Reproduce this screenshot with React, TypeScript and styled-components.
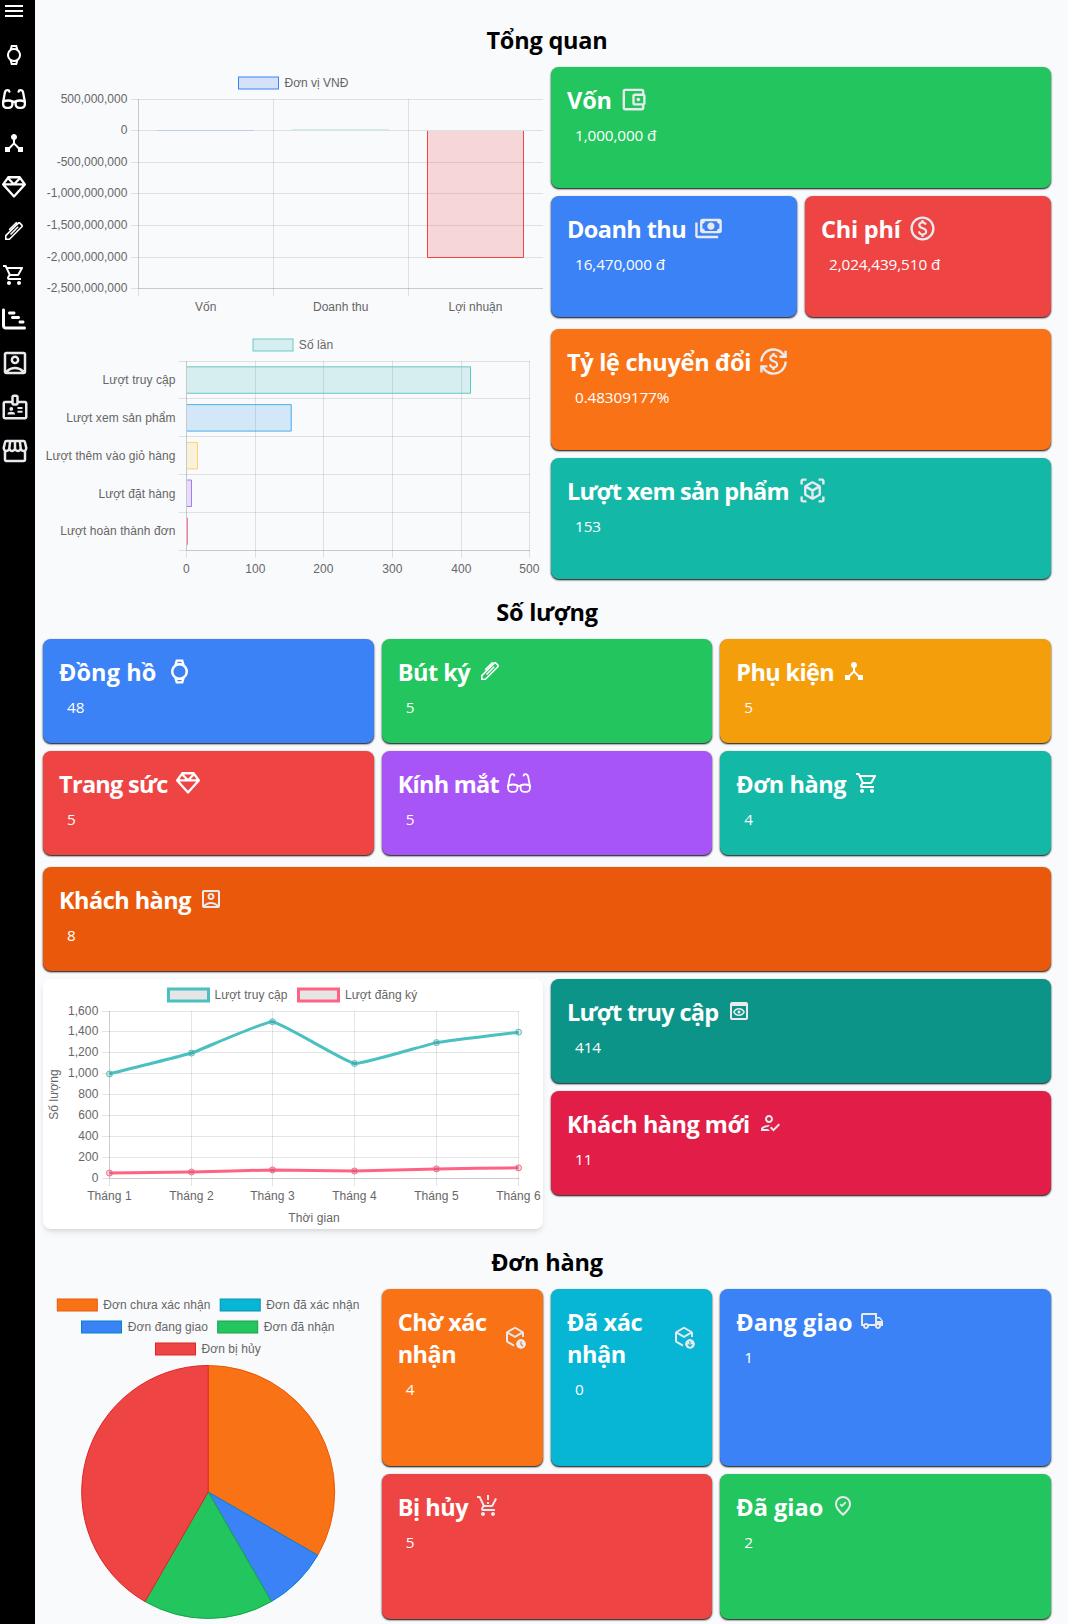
import React from 'react';
import styled, { createGlobalStyle } from 'styled-components';
import {
  MdMenu,
  MdDeviceHub,
  MdOutlineShoppingCart,
  MdOutlineAccountBox,
  MdOutlineBadge,
  MdOutlineStorefront,
  MdOutlineAccountBalanceWallet,
  MdOutlinePaid,
  MdCurrencyExchange,
  MdOutlinePreview,
  MdOutlineHowToReg,
  MdOutlineLocalShipping,
  MdProductionQuantityLimits,
} from 'react-icons/md';
import { FaRegGem, FaChartGantt } from 'react-icons/fa6';

const GlobalStyle = createGlobalStyle`
  *, *::before, *::after { box-sizing: border-box; }
  body {
    margin: 0;
    background: #f9fafc;
    font-family: 'Open Sans', 'Noto Sans', sans-serif;
    font-size: 16px;
    line-height: 24px;
    color: #000;
  }
`;

const Page = styled.div`
  display: flex;
  min-height: 1624px;
  overflow: hidden;
`;

const Sidebar = styled.nav`
  width: 35px;
  flex: none;
  background: #000;
  display: flex;
  flex-direction: column;
`;

const NavItem = styled.a<{ $first?: boolean; $soft?: boolean }>`
  display: flex;
  align-items: center;
  justify-content: center;
  flex: none;
  width: ${(p) => (p.$soft ? 30 : 28)}px;
  height: ${(p) => (p.$first ? 22 : 44)}px;
  margin-bottom: ${(p) => (p.$first ? 11 : 0)}px;
  color: ${(p) => (p.$soft ? '#e8eaed' : '#fff')};

  svg {
    display: block;
    flex: none;
  }
`;

const Main = styled.main`
  flex: 1;
  padding: 23px 17px 4px 8px;
`;

const Section = styled.section`
  margin-bottom: 16px;
`;

const Heading = styled.h2`
  margin: 0 0 11px;
  padding-top: 1px;
  font-size: 23.5px;
  line-height: 32px;
  font-weight: 700;
  letter-spacing: -0.2px;
  text-align: center;
`;

const Grid = styled.div<{ $cols: number; $top?: number; $rows?: string }>`
  display: grid;
  grid-template-columns: repeat(${(p) => p.$cols}, minmax(0, 1fr));
  grid-template-rows: ${(p) => p.$rows ?? 'none'};
  gap: 8px;
  margin-top: ${(p) => p.$top ?? 0}px;
`;

const CardBox = styled.article<{ $bg: string; $h?: number; $span?: number }>`
  height: ${(p) => (p.$h ? `${p.$h}px` : 'auto')};
  grid-column: span ${(p) => p.$span ?? 1};
  padding: 16px;
  border-radius: 8px;
  background: ${(p) => p.$bg};
  box-shadow: 0 1px 2px 0 #000;
  color: #fff;
`;

const CardHead = styled.div`
  display: flex;
  align-items: center;
  min-height: 32px;

  svg {
    display: block;
    flex: none;
    margin-top: -8px;
    margin-bottom: -8px;
  }
`;

const CardTitle = styled.h3<{ $w: number; $track?: number }>`
  flex: none;
  width: ${(p) => p.$w}px;
  margin: 1px 0 -1px;
  font-size: 23.5px;
  line-height: 32px;
  font-weight: 700;
  letter-spacing: ${(p) => p.$track ?? -0.23}px;
  white-space: ${(p) => (p.$w === 105 ? 'normal' : 'nowrap')};
`;

const CardValue = styled.p`
  margin: 8px 0 0 8px;
  font-size: 15.3px;
  line-height: 24px;
  letter-spacing: -0.1px;
`;

const Stack = styled.div`
  display: flex;
  flex-direction: column;
  gap: 8px;
`;

const ChartPanel = styled.div<{ $raised?: boolean; $h?: number }>`
  height: ${(p) => p.$h ?? 250}px;
  border-radius: 8px;
  background: ${(p) => (p.$raised ? '#fff' : 'transparent')};
  box-shadow: ${(p) =>
    p.$raised ? '0 4px 6px -1px rgba(0,0,0,.1), 0 2px 4px -2px rgba(0,0,0,.1)' : 'none'};
`;

const PiePanel = styled.div`
  grid-column: span 2;
  grid-row: span 2;
`;

const ChartSvg = styled.svg<{ $track?: number }>`
  display: block;
  overflow: visible;

  text {
    font-family: 'Liberation Sans', Arial, sans-serif;
    font-size: 12px;
    letter-spacing: ${(p) => p.$track ?? 0.08}px;
    fill: #666;
  }
`;

/* ---------- icons ---------- */

type IconProps = { size?: number };

const Symbol = ({ size = 24, d }: { size?: number; d: string }) => (
  <svg width={size} height={size} viewBox="0 -960 960 960" fill="currentColor">
    <path d={d} />
  </svg>
);

const WatchIcon = ({ size }: IconProps) => (
  <Symbol
    size={size}
    d="m360-80-54-182q-48-38-77-95t-29-123q0-66 29-123t77-95l54-182h240l54 182q48 38 77 95t29 123q0 66-29 123t-77 95L600-80H360Zm120-200q83 0 141.500-58.500T680-480q0-83-58.500-141.500T480-680q-83 0-141.500 58.500T280-480q0 83 58.500 141.500T480-280Zm-76-470q20-5 38.500-8t37.500-3q19 0 37.500 3t38.500 8l-16-50H420l-16 50Zm16 590h120l16-50q-20 5-38.500 7.500T480-200q-19 0-37.500-2.500T404-210l16 50Z"
  />
);

const PaymentsIcon = ({ size }: IconProps) => (
  <Symbol
    size={size}
    d="M560-440q-50 0-85-35t-35-85q0-50 35-85t85-35q50 0 85 35t35 85q0 50-35 85t-85 35ZM280-320q-33 0-56.500-23.500T200-400v-320q0-33 23.500-56.500T280-800h560q33 0 56.500 23.500T920-720v320q0 33-23.500 56.500T840-320H280Zm80-80h400q0-33 23.500-56.500T840-480v-160q-33 0-56.500-23.500T760-720H360q0 33-23.500 56.500T280-640v160q33 0 56.500 23.500T360-400Zm440 240H120q-33 0-56.500-23.500T40-240v-440h80v440h680v80Z"
  />
);

const ViewInArIcon = ({ size }: IconProps) => (
  <Symbol
    size={size}
    d="M440-181 240-296q-19-11-29.500-29T200-365v-230q0-22 10.500-40t29.500-29l200-115q19-11 40-11t40 11l200 115q19 11 29.500 29t10.500 40v230q0 22-10.500 40T720-296L520-181q-19 11-40 11t-40-11Zm0-92v-184l-160-93v185l160 92Zm80 0 160-92v-185l-160 93v184ZM80-680v-120q0-33 23.500-56.500T160-880h120v80H160v120H80ZM280-80H160q-33 0-56.500-23.500T80-160v-120h80v120h120v80Zm400 0v-80h120v-120h80v120q0 33-23.500 56.500T800-80H680Zm120-600v-120H680v-80h120q33 0 56.500 23.500T880-800v120h-80ZM480-526l158-93-158-91-158 91 158 93Z"
  />
);

const VotePinIcon = ({ size }: IconProps) => (
  <Symbol
    size={size}
    d="m438-434 180-180-46-46-134 134-52-52-46 46 98 98ZM480-80Q319-217 239.500-334.500T160-552q0-150 96.500-239T480-880q127 0 223.500 89T800-552q0 100-79.500 217.500T480-80Zm0-106q122-112 181-203.500T720-552q0-109-69.500-178.500T480-800q-101 0-170.500 69.500T240-552q0 71 59 162.500T480-186Z"
  />
);

const GlassesIcon = ({ stroke = 2.3 }: { stroke?: number }) => (
  <svg
    width="24"
    height="24"
    viewBox="0 0 24 24"
    fill="none"
    stroke="currentColor"
    strokeWidth={stroke}
    strokeLinecap="round"
    strokeLinejoin="round"
  >
    <path d="M1.100 14.800Q5.800 12.400 10.400 14.400V17.300a3.600 3.600 0 0 1-3.600 3.600H4.700a3.600 3.600 0 0 1-3.600-3.600Z" />
    <path d="M22.900 14.800Q18.200 12.400 13.600 14.400V17.300a3.600 3.600 0 0 0 3.600 3.600h2.100a3.600 3.600 0 0 0 3.600-3.600Z" />
    <path d="M1.100 15.200 2.900 5.400Q3.400 3.200 5.600 3.200 7.200 3.200 7.400 4.600M22.900 15.200 21.100 5.400Q20.600 3.200 18.400 3.200 16.800 3.200 16.600 4.600M10.400 15.400Q12 14.200 13.600 15.400" />
  </svg>
);

const PenIcon = () => (
  <svg width="24" height="24" viewBox="0 0 24 24" fill="none" stroke="currentColor" strokeWidth="1.600">
    <path d="M3.800 20.200v-3.600L16.500 3.900h1.100l2.500 2.500v1.100L7.400 20.200Z" />
    <path d="M7.200 10.900 14.200 3.900l1.700 1.700M8.500 15.500 16.200 7.800" />
  </svg>
);

const BoxBadge = ({ kind }: { kind: 'clock' | 'down' }) => {
  const mark = kind === 'clock' ? 'M18 16.400V19.200l1.800 1.800' : 'M18 16.300v5M15.900 19.300 18 21.400l2.100-2.100';
  const id = `badge-${kind}`;
  return (
    <svg width="24" height="24" viewBox="0 0 24 24" fill="none" stroke="currentColor" strokeWidth="2">
      <path d="M11 20.600 4.500 16.900Q4 16.600 4 16V7.900Q4 7.300 4.500 7L11.500 3q.5-.3 1 0L19.500 7q.5.3.5.9V12" />
      <path d="M4.300 7.400 12 11.800 19.700 7.400" />
      <mask id={id}>
        <circle cx="18" cy="19" r="5" fill="#fff" stroke="none" />
        <path d={mark} stroke="#000" strokeWidth="1.100" />
      </mask>
      <circle cx="18" cy="19" r="5" fill="currentColor" stroke="none" mask={`url(#${id})`} />
    </svg>
  );
};

const Soft = styled.span`
  display: flex;
  color: #e8eaed;
`;

/* ---------- cards ---------- */

type CardProps = {
  title: string;
  value: string;
  bg: string;
  w: number;
  icon: React.ReactNode;
  soft?: boolean;
  h?: number;
  span?: number;
  track?: number;
};

const Card = ({ title, value, bg, w, icon, soft, h, span, track }: CardProps) => (
  <CardBox $bg={bg} $h={h} $span={span}>
    <CardHead>
      <CardTitle $w={w} $track={track}>
        {title}
      </CardTitle>
      {soft ? <Soft>{icon}</Soft> : icon}
    </CardHead>
    <CardValue>{value}</CardValue>
  </CardBox>
);

/* ---------- charts ---------- */

const GRID = 'rgba(0,0,0,.1)';

type LegendProps = { x: number; y?: number; label: string; fill: string; stroke: string; sw?: number; tx: number };
const Legend = ({ x, y = 10, label, fill, stroke, sw = 1, tx }: LegendProps) => (
  <>
    <rect x={x} y={y} width="40" height="12" fill={fill} stroke={stroke} strokeWidth={sw} />
    <text x={tx} y={y + 10.300}>
      {label}
    </text>
  </>
);

type AxesProps = {
  xs: number[];
  ys: number[];
  left: number;
  right: number;
  top: number;
  tick: number;
};
const Axes = ({ xs, ys, left, right, top, tick }: AxesProps) => {
  const bottom = ys[ys.length - 1];
  return (
    <g stroke={GRID}>
      {ys.map((y) => (
        <line key={`h${y}`} x1={left} x2={right} y1={y} y2={y} />
      ))}
      {xs.map((x) => (
        <line key={`v${x}`} x1={x} x2={x} y1={top} y2={tick} />
      ))}
      <line x1={xs[0]} x2={xs[0]} y1={top} y2={bottom} />
      <line x1={xs[0]} x2={right} y1={bottom} y2={bottom} />
    </g>
  );
};

const MoneyChart = () => {
  const ys = [32.500, 63.500, 95.500, 126.500, 158.500, 190.500, 221.500];
  const labels = [
    '500,000,000',
    '0',
    '-500,000,000',
    '-1,000,000,000',
    '-1,500,000,000',
    '-2,000,000,000',
    '-2,500,000,000',
  ];
  return (
    <ChartSvg $track={0} width="500" height="250" viewBox="0 0 500 250">
      <Legend x={195.500} tx={241.500} label="Đơn vị VNĐ" fill="rgba(59,130,246,.2)" stroke="#3b82f6" />
      <Axes xs={[95.500, 230.500, 365.500]} ys={ys} left={88} right={500} top={32} tick={229} />
      <rect x="114" y="63" width="97" height="1" fill="rgba(59,130,246,.2)" />
      <rect x="249" y="62" width="97" height="1" fill="rgba(34,197,94,.2)" />
      <rect x="384" y="64" width="97" height="127" fill="rgba(239,68,68,.2)" />
      <path d="M384.500 64V190.500H480.500V64" fill="none" stroke="#ef4444" />
      {labels.map((t, i) => (
        <text key={t} x="84.400" y={ys[i] + 3.800} textAnchor="end">
          {t}
        </text>
      ))}
      <g textAnchor="middle">
        <text x="162.700" y="244">Vốn</text>
        <text x="297.700" y="244">Doanh thu</text>
        <text x="432.500" y="244">Lợi nhuận</text>
      </g>
    </ChartSvg>
  );
};

const FunnelChart = () => {
  const xs = [143.500, 212.500, 280.500, 349.500, 418.500, 486.500];
  const bars = [
    { label: 'Lượt truy cập', end: 428, y: 37.800, c: '75,192,192' },
    { label: 'Lượt xem sản phẩm', end: 248.700, y: 75.600, c: '54,162,235' },
    { label: 'Lượt thêm vào giỏ hàng', end: 155, y: 113.400, c: '255,206,86' },
    { label: 'Lượt đặt hàng', end: 149, y: 151, c: '153,102,255' },
    { label: 'Lượt hoàn thành đơn', end: 145, y: 189, c: '255,99,132' },
  ];
  const labelYs = [55.300, 93.100, 130.900, 168.500, 205.600];
  return (
    <ChartSvg width="500" height="250" viewBox="0 0 500 250">
      <Legend x={210} tx={255.800} label="Số lần" fill="rgba(75,192,192,.2)" stroke="rgba(75,192,192,.8)" />
      <Axes
        xs={xs}
        ys={[32.500, 69.500, 107.500, 145.500, 183.500, 221.500]}
        left={135.500}
        right={487}
        top={32}
        tick={229}
      />
      {bars.map((b, i) => (
        <g key={b.label}>
          <rect x="144" y={b.y} width={b.end - 144} height="26.500" fill={`rgba(${b.c},.2)`} />
          <path
            d={`M144 ${b.y}H${b.end - 0.500}V${b.y + 26.500}H144`}
            fill="none"
            stroke={`rgba(${b.c},.85)`}
          />
          <text x="132.500" y={labelYs[i]} textAnchor="end">
            {b.label}
          </text>
        </g>
      ))}
      {xs.map((x, i) => (
        <text key={x} x={x} y="244.300" textAnchor="middle">
          {i * 100}
        </text>
      ))}
    </ChartSvg>
  );
};

const curve = (pts: [number, number][], tension: number) => {
  const ctl = pts.map((p, i) => {
    const a = pts[Math.max(i - 1, 0)];
    const b = pts[Math.min(i + 1, pts.length - 1)];
    const d1 = Math.hypot(p[0] - a[0], p[1] - a[1]);
    const d2 = Math.hypot(b[0] - p[0], b[1] - p[1]);
    const sum = d1 + d2 || 1;
    const fa = (tension * d1) / sum;
    const fb = (tension * d2) / sum;
    const dx = b[0] - a[0];
    const dy = b[1] - a[1];
    return { inn: [p[0] - fa * dx, p[1] - fa * dy], out: [p[0] + fb * dx, p[1] + fb * dy] };
  });
  return pts
    .map((p, i) => (i === 0 ? `M${p.join(' ')}` : `C${ctl[i - 1].out.join(' ')} ${ctl[i].inn.join(' ')} ${p.join(' ')}`))
    .join('');
};

const VisitsChart = () => {
  const xs = [66.500, 148.500, 229.500, 311.500, 393.500, 475.500];
  const ys = [32.500, 52.500, 73.500, 94.500, 115.500, 136.500, 157.500, 178.500, 199.500];
  const labels = ['1,600', '1,400', '1,200', '1,000', '800', '600', '400', '200', '0'];
  const series = [
    { color: 'rgb(255,99,132)', data: [50, 60, 80, 70, 90, 100] },
    { color: 'rgb(75,192,192)', data: [1000, 1200, 1500, 1100, 1300, 1400] },
  ];
  return (
    <ChartSvg width="500" height="250" viewBox="0 0 500 250">
      <Legend x={125.500} tx={171.500} label="Lượt truy cập" fill="rgba(0,0,0,.1)" stroke="rgb(75,192,192)" sw={3} />
      <Legend x={255.500} tx={302} label="Lượt đăng ký" fill="rgba(0,0,0,.1)" stroke="rgb(255,99,132)" sw={3} />
      <Axes xs={xs} ys={ys} left={59} right={476} top={32} tick={207} />
      {series.map((s) => {
        const pts = s.data.map((v, i): [number, number] => [xs[i], 199.300 - (v / 1600) * 167]);
        return (
          <g key={s.color} stroke={s.color}>
            <path d={curve(pts, 0.100)} fill="none" strokeWidth="3" />
            {pts.map((p) => (
              <circle key={p[0]} cx={p[0]} cy={p[1]} r="3" fill="rgba(0,0,0,.1)" />
            ))}
          </g>
        );
      })}
      {labels.map((t, i) => (
        <text key={t} x="55.400" y={ys[i] + 3.800} textAnchor="end">
          {t}
        </text>
      ))}
      <g textAnchor="middle">
        {xs.map((x, i) => (
          <text key={x} x={x} y="221.300">
            {`Tháng ${i + 1}`}
          </text>
        ))}
        <text x="271" y="243.300">Thời gian</text>
        <text transform="translate(15 115.500) rotate(-90)">Số lượng</text>
      </g>
    </ChartSvg>
  );
};

const OrdersPie = () => {
  const cx = 165.200;
  const cy = 203;
  const r = 126.500;
  const slices = [
    { n: 4, fill: '#f97316', stroke: '#ea580c' },
    { n: 1, fill: '#3b82f6', stroke: '#0284c7' },
    { n: 2, fill: '#22c55e', stroke: '#16a34a' },
    { n: 5, fill: '#ef4444', stroke: '#dc2626' },
  ];
  let acc = 0;
  const at = (k: number) => {
    const a = (k / 12) * Math.PI * 2;
    return `${cx + r * Math.sin(a)} ${cy - r * Math.cos(a)}`;
  };
  return (
    <ChartSvg width="330" height="330" viewBox="0 0 330 330">
      <Legend x={14.300} tx={60.200} label="Đơn chưa xác nhận" fill="#f97316" stroke="#ea580c" />
      <Legend x={177.200} tx={223.300} label="Đơn đã xác nhận" fill="#06b6d4" stroke="#0891b2" />
      <Legend x={38.500} y={32} tx={84.800} label="Đơn đang giao" fill="#3b82f6" stroke="#0284c7" />
      <Legend x={174.700} y={32} tx={220.800} label="Đơn đã nhận" fill="#22c55e" stroke="#16a34a" />
      <Legend x={112.500} y={54} tx={158.500} label="Đơn bị hủy" fill="#ef4444" stroke="#dc2626" />
      {slices.map((s) => {
        const from = at(acc);
        acc += s.n;
        return (
          <path
            key={s.fill}
            d={`M${cx} ${cy}L${from}A${r} ${r} 0 0 1 ${at(acc)}Z`}
            fill={s.fill}
            stroke={s.stroke}
            strokeWidth="1"
            strokeLinejoin="bevel"
          />
        );
      })}
    </ChartSvg>
  );
};

/* ---------- page ---------- */

export default function App() {
  return (
    <>
      <GlobalStyle />
      <Page>
        <Sidebar>
          <NavItem $first>
            <MdMenu size={24} />
          </NavItem>
          <NavItem>
            <WatchIcon size={24} />
          </NavItem>
          <NavItem>
            <GlassesIcon />
          </NavItem>
          <NavItem>
            <MdDeviceHub size={24} />
          </NavItem>
          <NavItem>
            <FaRegGem size={24} />
          </NavItem>
          <NavItem>
            <PenIcon />
          </NavItem>
          <NavItem>
            <MdOutlineShoppingCart size={24} />
          </NavItem>
          <NavItem>
            <FaChartGantt size={24} />
          </NavItem>
          <NavItem $soft>
            <MdOutlineAccountBox size={30} />
          </NavItem>
          <NavItem $soft>
            <MdOutlineBadge size={30} />
          </NavItem>
          <NavItem $soft>
            <MdOutlineStorefront size={30} />
          </NavItem>
        </Sidebar>

        <Main>
          <Section>
            <Heading>Tổng quan</Heading>
            <Grid $cols={2}>
              <ChartPanel>
                <MoneyChart />
              </ChartPanel>
              <Stack>
                <Card title="Vốn" value="1,000,000 đ" bg="#22c55e" w={52} track={-0.1} h={121} soft icon={<MdOutlineAccountBalanceWallet size={29} />} />
                <Grid $cols={2}>
                  <Card title="Doanh thu" value="16,470,000 đ" bg="#3b82f6" w={127} track={-0.58} h={121} soft icon={<PaymentsIcon size={29} />} />
                  <Card title="Chi phí" value="2,024,439,510 đ" bg="#ef4444" w={87} h={121} soft icon={<MdOutlinePaid size={29} />} />
                </Grid>
              </Stack>
            </Grid>
            <Grid $cols={2} $top={12}>
              <ChartPanel>
                <FunnelChart />
              </ChartPanel>
              <Stack>
                <Card title="Tỷ lệ chuyển đổi" value="0.48309177%" bg="#f97316" w={192} track={-0.3} h={121} soft icon={<MdCurrencyExchange size={29} />} />
                <Card title="Lượt xem sản phẩm" value="153" bg="#14b8a6" w={231} track={-0.78} h={121} soft icon={<ViewInArIcon size={29} />} />
              </Stack>
            </Grid>
          </Section>

          <Section>
            <Heading>Số lượng</Heading>
            <Grid $cols={3}>
              <Card title="Đồng hồ" value="48" bg="#3b82f6" w={105.5} track={0.08} h={104} icon={<WatchIcon size={29} />} />
              <Card title="Bút ký" value="5" bg="#22c55e" w={80.5} track={-0.48} h={104} icon={<PenIcon />} />
              <Card title="Phụ kiện" value="5" bg="#f59e0b" w={105.5} track={-0.63} h={104} icon={<MdDeviceHub size={24} />} />
              <Card title="Trang sức" value="5" bg="#ef4444" w={117} track={-0.7} h={104} icon={<FaRegGem size={24} />} />
              <Card title="Kính mắt" value="5" bg="#a855f7" w={109.3} track={-0.73} h={104} icon={<GlassesIcon stroke={1.8} />} />
              <Card title="Đơn hàng" value="4" bg="#14b8a6" w={118.5} track={-0.43} h={104} icon={<MdOutlineShoppingCart size={24} />} />
            </Grid>
            <Grid $cols={1} $top={12}>
              <Card title="Khách hàng" value="8" bg="#ea580c" w={140} track={-0.53} h={104} soft icon={<MdOutlineAccountBox size={24} />} />
            </Grid>
            <Grid $cols={2} $top={8}>
              <ChartPanel $raised>
                <VisitsChart />
              </ChartPanel>
              <Stack>
                <Card title="Lượt truy cập" value="414" bg="#0d9488" w={160} track={-0.68} h={104} soft icon={<MdOutlinePreview size={24} />} />
                <Card title="Khách hàng mới" value="11" bg="#e11d48" w={190.5} track={-0.5} h={104} soft icon={<MdOutlineHowToReg size={24} />} />
              </Stack>
            </Grid>
          </Section>

          <Section>
            <Heading>Đơn hàng</Heading>
            <Grid $cols={6} $rows="177px 145px">
              <PiePanel>
                <OrdersPie />
              </PiePanel>
              <Card title="Chờ xác nhận" value="4" bg="#f97316" w={105} track={-0.5} soft icon={<BoxBadge kind="clock" />} />
              <Card title="Đã xác nhận" value="0" bg="#06b6d4" w={105} track={-0.4} soft icon={<BoxBadge kind="down" />} />
              <Card title="Đang giao" value="1" bg="#3b82f6" w={123.5} track={0.07} span={2} soft icon={<MdOutlineLocalShipping size={24} />} />
              <Card title="Bị hủy" value="5" bg="#ef4444" w={78.5} track={-0.45} span={2} soft icon={<MdProductionQuantityLimits size={24} />} />
              <Card title="Đã giao" value="2" bg="#22c55e" w={95} track={0} span={2} soft icon={<VotePinIcon size={24} />} />
            </Grid>
          </Section>
        </Main>
      </Page>
    </>
  );
}
